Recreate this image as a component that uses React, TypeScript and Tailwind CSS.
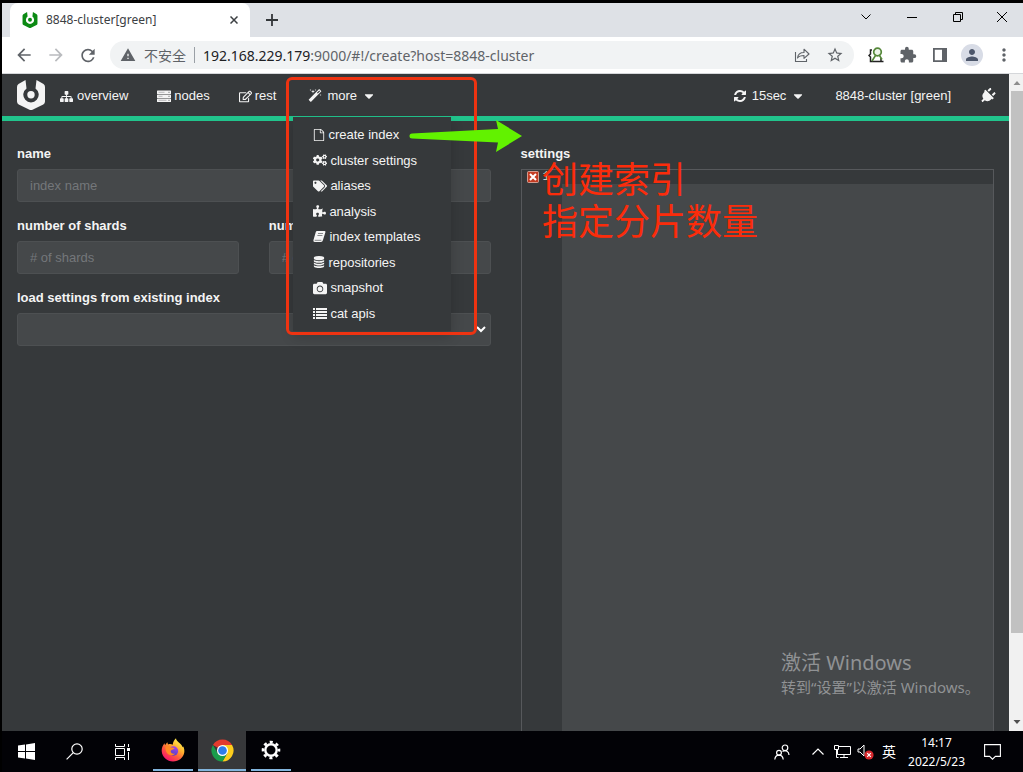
import React from 'react';
import { FaCamera, FaCaretDown, FaCogs, FaPlug, FaPuzzlePiece, FaRegEdit, FaTags } from 'react-icons/fa';
import { MdArrowBack, MdArrowForward, MdRefresh, MdWarning, MdStarBorder, MdExtension, MdPerson, MdMoreVert } from 'react-icons/md';

type GlyphProps = { d: string; className?: string };

function Glyph({ d, className = 'h-[13px] w-[13px]' }: GlyphProps) {
  return (
    <svg viewBox="0 0 1792 1792" className={className} fill="currentColor" aria-hidden="true">
      <path d={d} />
    </svg>
  );
}

const SITEMAP =
  'M1792 1248v320q0 40-28 68t-68 28h-320q-40 0-68-28t-28-68v-320q0-40 28-68t68-28h96v-192h-512v192h96q40 0 68 28t28 68v320q0 40-28 68t-68 28h-320q-40 0-68-28t-28-68v-320q0-40 28-68t68-28h96v-192h-512v192h96q40 0 68 28t28 68v320q0 40-28 68t-68 28h-320q-40 0-68-28t-28-68v-320q0-40 28-68t68-28h96v-192q0-52 38-90t90-38h512v-192h-96q-40 0-68-28t-28-68v-320q0-40 28-68t68-28h320q40 0 68 28t28 68v320q0 40-28 68t-68 28h-96v192h512q52 0 90 38t38 90v192h96q40 0 68 28t28 68z';
const MAGIC =
  'M1254 581l293-293-107-107-293 293zm447-293q0 27-18 45l-1286 1286q-18 18-45 18t-45-18l-198-198q-18-18-18-45t18-45l1286-1286q18-18 45-18t45 18l198 198q18 18 18 45zm-1351-190l98 30-98 30-30 98-30-98-98-30 98-30 30-98zm350 162l196 60-196 60-60 196-60-196-196-60 196-60 60-196zm930 478l98 30-98 30-30 98-30-98-98-30 98-30 30-98zm-640-640l98 30-98 30-30 98-30-98-98-30 98-30 30-98z';
const REFRESH =
  'M1639 1056q0 5-1 7-64 268-268 434.5t-478 166.5q-146 0-282.5-55t-243.5-157l-129 129q-19 19-45 19t-45-19-19-45v-448q0-26 19-45t45-19h448q26 0 45 19t19 45-19 45l-137 137q71 66 161 102t187 36q134 0 250-65t186-179q11-17 53-117 8-23 30-23h192q13 0 22.5 9.5t9.5 22.5zm25-800v448q0 26-19 45t-45 19h-448q-26 0-45-19t-19-45 19-45l138-138q-148-137-349-137-134 0-250 65t-186 179q-11 17-53 117-8 23-30 23h-199q-13 0-22.5-9.5t-9.5-22.5v-7q65-268 270-434.5t480-166.5q146 0 284 55.5t245 156.5l130-129q19-19 45-19t45 19 19 45z';
const FILE =
  'M1596 380q28 28 48 76t20 88v1152q0 40-28 68t-68 28h-1344q-40 0-68-28t-28-68v-1600q0-40 28-68t68-28h896q40 0 88 20t76 48zm-444-244v376h376q-10-29-22-41l-313-313q-12-12-41-22zm384 1528v-1024h-416q-40 0-68-28t-28-68v-416h-768v1536h1280z';
const DATABASE =
  'M896 768q237 0 443-43t325-127v170q0 69-103 128t-280 93.5-385 34.5-385-34.5-280-93.5-103-128v-170q119 84 325 127t443 43zm0 768q237 0 443-43t325-127v170q0 69-103 128t-280 93.5-385 34.5-385-34.5-280-93.5-103-128v-170q119 84 325 127t443 43zm0-384q237 0 443-43t325-127v170q0 69-103 128t-280 93.5-385 34.5-385-34.5-280-93.5-103-128v-170q119 84 325 127t443 43zm0-1152q208 0 385 34.5t280 93.5 103 128v128q0 69-103 128t-280 93.5-385 34.5-385-34.5-280-93.5-103-128v-128q0-69 103-128t280-93.5 385-34.5z';

function Logo({ className }: { className: string }) {
  return (
    <svg viewBox="0 0 28 30" className={className} fill="currentColor" aria-hidden="true">
      <path d="M8.500 0L9.500 8.450A7.700 7.700 0 1 0 18.500 8.450L19.500 0 26.500 4Q28 5 28 7v14.500q0 2-1.700 3.100L16 29.500q-2 1-4 0L1.700 24.600Q0 23.500 0 21.500V7q0-2 1.500-3z" />
      <circle cx="14" cy="14.700" r="3.700" />
    </svg>
  );
}

function ServerIcon() {
  return (
    <svg viewBox="0 0 14 13" className="h-[13px] w-[14px]" aria-hidden="true">
      <g fill="#f4f4f4">
        <rect y=".5" width="14" height="3.500" rx=".6" />
        <rect y="4.500" width="14" height="3.500" rx=".6" />
        <rect y="8.500" width="14" height="3.500" rx=".6" />
      </g>
      <path d="M1.500 2.300h6M1.500 6.300h4M1.500 10.300h8" stroke="#a9abad" strokeWidth=".8" />
      <path d="M11.500 2.300h1M11.500 6.300h1M11.500 10.300h1" stroke="#55585a" />
    </svg>
  );
}

function BookIcon() {
  return (
    <svg viewBox="0 0 13 13" className="h-[13px] w-[13px]" aria-hidden="true">
      <path d="M4 1h7.500q1.300 0 .9 1.300l-2.500 8Q9.500 12 8 12H1.700Q0 12 .4 10.300L2.800 2Q3.100 1 4 1z" fill="#f4f4f4" />
      <path d="M5 3.500h5M4.400 5.500h5M1.700 10.300h6.600" stroke="#6c6f71" strokeWidth=".8" />
    </svg>
  );
}

function ListIcon() {
  return (
    <svg viewBox="0 0 14 13" className="h-[13px] w-[14px]" fill="currentColor" aria-hidden="true">
      <path d="M0 1h2v2H0zM3 1h11v2H3zM0 4h2v2H0zM3 4h11v2H3zM0 7h2v2H0zM3 7h11v2H3zM0 10h2v2H0zM3 10h11v2H3z" />
    </svg>
  );
}

const menuItems: { label: string; icon: React.ReactNode }[] = [
  { label: 'create index', icon: <Glyph d={FILE} className="h-[14px] w-[12px]" /> },
  { label: 'cluster settings', icon: <FaCogs className="h-[14px] w-[14px]" /> },
  { label: 'aliases', icon: <FaTags className="h-[14px] w-[14px]" /> },
  { label: 'analysis', icon: <FaPuzzlePiece className="h-[12px] w-[13px]" /> },
  { label: 'index templates', icon: <BookIcon /> },
  { label: 'repositories', icon: <Glyph d={DATABASE} className="h-[14px] w-[12px]" /> },
  { label: 'snapshot', icon: <FaCamera className="h-[14px] w-[14px]" /> },
  { label: 'cat apis', icon: <ListIcon /> },
];

function TabStrip() {
  return (
    <div className="flex h-[34px] items-end bg-[#dee1e6] pl-2 text-[#3c4043]">
      <div className="flex h-[34px] w-[240px] items-center rounded-t-lg bg-white pr-2 pl-3">
        <Logo className="h-[16px] w-[16px] text-[#0c8a14]" />
        <span className="ml-2 flex-1 text-[12px]">8848-cluster[green]</span>
        <button aria-label="Close tab" className="flex h-4 w-4 items-center justify-center">
          <svg viewBox="0 0 8 8" className="h-2 w-2" stroke="currentColor" strokeWidth="1.500"><path d="M.5.5l7 7M7.500.5l-7 7" /></svg>
        </button>
      </div>
      <button aria-label="New tab" className="ml-4 flex h-full w-3 items-center justify-center">
        <svg viewBox="0 0 12 12" className="h-3 w-3" stroke="#333639" strokeWidth="1.800"><path d="M6 0v12M0 6h12" /></svg>
      </button>
      <div className="ml-auto flex h-full items-center text-black">
        <button aria-label="Search tabs" className="mb-1.5 flex w-[46px] justify-center">
          <svg viewBox="0 0 10 6" className="h-[6px] w-[10px]" fill="none" stroke="currentColor"><path d="M.5.5L5 5 9.500.5" /></svg>
        </button>
        <button aria-label="Minimize" className="mb-1.5 flex w-[46px] justify-center">
          <svg viewBox="0 0 10 10" className="h-[10px] w-[10px]" stroke="currentColor"><path d="M0 5.500h10" /></svg>
        </button>
        <button aria-label="Restore" className="mb-1.5 flex w-[46px] justify-center">
          <svg viewBox="0 0 10 10" className="h-[10px] w-[10px]" fill="none" stroke="currentColor"><path d="M.5 2.500h7v7h-7zM2.500 2.500v-2h7v7h-2" /></svg>
        </button>
        <button aria-label="Close" className="mb-1.5 flex w-[42px] justify-center">
          <svg viewBox="0 0 10 10" className="h-[10px] w-[10px]" stroke="currentColor"><path d="M0 0l10 10M10 0L0 10" /></svg>
        </button>
      </div>
    </div>
  );
}

function Toolbar() {
  return (
    <div className="flex h-[37px] items-center border-b border-[#d5d7da] bg-white pr-[3px] pl-3 text-[#5f6368]">
      <button aria-label="Back" className="flex h-5 w-5 items-center justify-center"><MdArrowBack size={20} /></button>
      <button aria-label="Forward" className="ml-3 flex h-5 w-5 items-center justify-center text-[#b9bbbe]"><MdArrowForward size={20} /></button>
      <button aria-label="Reload" className="ml-3 flex h-5 w-5 items-center justify-center"><MdRefresh size={21} /></button>
      <div className="ml-3 flex h-7 flex-1 items-center rounded-full bg-[#f1f3f4] px-2.5">
        <MdWarning size={16} />
        <span className="ml-2 text-[14px]">不安全</span>
        <span className="mx-2 h-4 w-px bg-[#9aa0a6]" />
        <span className="flex-1 text-[14px] whitespace-nowrap">
          <span className="text-[#202124]">192.168.229.179</span>:9000/#!/create?host=8848-cluster
        </span>
        <button aria-label="Share" className="mr-4">
          <svg viewBox="0 0 16 16" className="h-4 w-4" fill="none" stroke="currentColor" strokeWidth="1.100">
            <path d="M1.500 5v9.500h11V12" />
            <path d="M3.500 11c.5-4 3-5.500 6.500-5.500V2.200L15 7l-5 4.300V8.500C7 8.500 5 9 3.500 11z" strokeLinejoin="round" />
          </svg>
        </button>
        <button aria-label="Bookmark"><MdStarBorder size={18} /></button>
      </div>
      <div className="flex items-center">
        <button aria-label="Developer helper" className="ml-1.5 flex w-8 justify-center">
          <svg viewBox="0 0 16 16" className="h-4 w-4" fill="none">
            <path d="M4 3H2.500v4L1 8.500 2.500 10v4.500H5M13 11v3.500M3 14.500h12.500" stroke="#222" strokeWidth="1.500" />
            <circle cx="9.500" cy="5" r="3.800" stroke="#56883a" strokeWidth="1.700" fill="#eef5ea" />
            <path d="M7.500 8.500L4 14M11.500 8.500L14 12.500" stroke="#56883a" strokeWidth="1.600" />
          </svg>
        </button>
        <button aria-label="Extensions" className="flex w-8 justify-center"><MdExtension size={18} /></button>
        <button aria-label="Side panel" className="flex w-8 justify-center">
          <svg viewBox="0 0 14 14" className="h-[14px] w-[14px]"><path fill="currentColor" fillRule="evenodd" d="M0 0h14v14H0zM1.800 1.800v10.400H9V1.800z" /></svg>
        </button>
        <button aria-label="Profile" className="flex w-8 justify-center">
          <span className="flex h-[22px] w-[22px] items-center justify-center rounded-full bg-[#d8dce6] text-[#4d576b]"><MdPerson size={18} /></span>
        </button>
        <button aria-label="Menu" className="flex w-8 justify-center"><MdMoreVert size={20} /></button>
      </div>
    </div>
  );
}

function NavBar() {
  return (
    <nav className="flex h-[47px] border-b-[5px] border-[#21c48c] pr-[14px] pl-[15px] text-[13px]">
      <a href="#home" aria-label="Home" className="flex items-center"><Logo className="h-[30px] w-[28px]" /></a>
      <ul className="flex flex-1 pt-0.5">
        <li className="flex"><a href="#overview" className="flex items-center gap-1 px-[15px]"><Glyph d={SITEMAP} />overview</a></li>
        <li className="flex"><a href="#nodes" className="flex items-center gap-[3px] px-[14px]"><ServerIcon />nodes</a></li>
        <li className="flex"><a href="#rest" className="flex items-center gap-[3px] px-[15px]"><FaRegEdit size={13} />rest</a></li>
        <li className="relative flex">
          <button className="flex items-center gap-[5px] px-[17px]"><Glyph d={MAGIC} className="h-[14px] w-[14px]" />more<FaCaretDown className="ml-0.5 h-[14px] w-[10px]" /></button>
          <ul className="absolute top-[41px] left-0.5 z-10 grid h-[214px] w-[158px] auto-rows-fr bg-[#36393b] py-[5px] pl-5 shadow-[0_6px_12px_rgba(0,0,0,0.18)]">
            {menuItems.map((item) => (
              <li key={item.label} className="flex">
                <a href="#menu" className="flex items-center gap-[3px] whitespace-nowrap">{item.icon}{item.label}</a>
              </li>
            ))}
          </ul>
        </li>
      </ul>
      <div className="flex pt-0.5">
        <button className="flex items-center gap-[5px]"><Glyph d={REFRESH} className="h-[14px] w-[14px]" />15sec<FaCaretDown className="ml-0.5 h-[14px] w-[10px]" /></button>
        <a href="#cluster" className="ml-8 flex items-center">8848-cluster [green]</a>
        <button aria-label="Disconnect" className="ml-[29px] flex items-center"><FaPlug className="h-[16px] w-[15px] rotate-45" /></button>
      </div>
    </nav>
  );
}

function Field({ id, label, placeholder }: { id: string; label: string; placeholder: string }) {
  return (
    <div className="flex flex-col gap-1.5">
      <label htmlFor={id} className="leading-[18px] font-bold">{label}</label>
      <input id={id} placeholder={placeholder} className="h-[33px] w-full rounded-[3px] border border-[#4d5052] bg-[#45484a] px-3 placeholder:text-[#74777a]" />
    </div>
  );
}

function CreateIndex() {
  return (
    <main className="grid min-h-0 flex-1 grid-cols-2 gap-[30px] px-[15px] pt-6 text-[13px]">
      <form className="flex flex-col gap-[15px]">
        <Field id="name" label="name" placeholder="index name" />
        <div className="grid grid-cols-2 gap-[30px]">
          <Field id="shards" label="number of shards" placeholder="# of shards" />
          <Field id="replicas" label="number of replicas" placeholder="# of replicas" />
        </div>
        <div className="flex flex-col gap-1.5">
          <label htmlFor="existing" className="leading-[18px] font-bold">load settings from existing index</label>
          <div className="relative">
            <select id="existing" className="block h-[33px] w-full appearance-none rounded-[3px] border border-[#4d5052] bg-[#45484a] px-3">
              <option />
            </select>
            <svg viewBox="0 0 10 7" className="pointer-events-none absolute top-[13px] right-[5px] h-[7px] w-[10px]" fill="none" stroke="#fff" strokeWidth="2"><path d="M1 1l4 4 4-4" /></svg>
          </div>
        </div>
      </form>
      <section className="flex min-h-0 flex-col gap-1.5">
        <label htmlFor="settings" className="leading-[18px] font-bold">settings</label>
        <div className="flex min-h-0 flex-1 border border-b-0 border-[#57595c]">
          <div className="flex h-[14px] w-10 items-center gap-1 pl-[5px] font-['Liberation_Mono'] text-[12px] text-[#c8cacc]">
            <svg viewBox="0 0 12 12" className="h-3 w-3 shrink-0"><rect x=".5" y=".5" width="11" height="11" rx="1" fill="#c23b22" stroke="#e8b5a8" strokeWidth=".8" /><path d="M3 3l6 6M9 3L3 9" stroke="#fff" strokeWidth="2" /></svg>
            1
          </div>
          <div className="flex flex-1 flex-col">
            <div className="h-[14px]" />
            <textarea id="settings" className="block w-full flex-1 resize-none bg-[#45484a]" />
          </div>
        </div>
      </section>
    </main>
  );
}

function ScrollBar() {
  return (
    <div className="flex w-[14px] shrink-0 flex-col items-center bg-[#f1f1f1]">
      <svg viewBox="0 0 14 17" className="h-[17px] w-[14px]"><path d="M4.500 11h7L8 7z" fill="#8d8d8d" /></svg>
      <div className="flex min-h-0 w-full flex-1 flex-col pl-0.5">
        <div className="h-[87%] bg-[#c1c1c1]" />
      </div>
      <svg viewBox="0 0 14 17" className="h-[17px] w-[14px]"><path d="M4.500 6h7L8 10z" fill="#505050" /></svg>
    </div>
  );
}

function FirefoxIcon() {
  return (
    <svg viewBox="0 0 24 24" className="h-6 w-6" aria-hidden="true">
      <defs>
        <linearGradient id="ffBody" x1=".85" y1=".1" x2=".25" y2=".95">
          <stop offset="0" stopColor="#fff44f" /><stop offset=".35" stopColor="#ffb02e" /><stop offset=".65" stopColor="#ff5a3c" /><stop offset="1" stopColor="#f5156c" />
        </linearGradient>
        <linearGradient id="ffCore" x1=".7" y1="0" x2=".3" y2="1">
          <stop offset="0" stopColor="#a648e8" /><stop offset="1" stopColor="#4f3cc9" />
        </linearGradient>
      </defs>
      <path d="M3.500 5.200L4 7.300l2.300-3 .7 2.200c2-.7 3.500-.3 4.700.2.300-2.500 1.600-4.800 3.300-6.400 0 2.500 2.200 3.300 4 5.200C20.500 7 21.400 8.300 21.700 9.200l.6-.7c1 2.300 1.200 4 1 5.800C22.500 19.800 17.700 23.500 12 23.500S1 19 .7 13C.6 10 1.700 7.300 3.500 5.200z" fill="url(#ffBody)" />
      <circle cx="12.500" cy="13" r="4.700" fill="url(#ffCore)" />
      <path d="M4.500 8.500c2-1 4.500-.5 5.500 1 1.500 0 3 .2 3.700 1-1.700 1-3.700 1.200-4 2.500-.2 2 2 3.300 4.500 2.500-1.500 2.300-6 2.500-8.200-.5-1.300-2-1.800-4.500-1.500-6.500z" fill="#ff8a23" />
    </svg>
  );
}

function ChromeIcon() {
  return (
    <svg viewBox="0 0 48 48" className="h-[23px] w-[23px]" aria-hidden="true">
      <path d="M24 24L4.080 12.500A23 23 0 0 1 43.920 12.500H24z" fill="#e33b2e" />
      <path d="M24 12.500h19.920A23 23 0 0 1 24 47l9.960-17.250z" fill="#fccd1d" />
      <path d="M4.080 12.500l9.960 17.250L33.960 29.750 24 47A23 23 0 0 1 4.080 12.500z" fill="#1a9c4b" />
      <circle cx="24" cy="24" r="11.500" fill="#fff" />
      <circle cx="24" cy="24" r="9" fill="#2f7de9" />
    </svg>
  );
}

function SettingsIcon() {
  return (
    <svg viewBox="0 0 20 20" className="h-5 w-5" fill="none" stroke="#fff" aria-hidden="true">
      <circle cx="10" cy="10" r="5.700" strokeWidth="2.400" />
      <circle cx="10" cy="10" r="8" strokeWidth="2.600" strokeDasharray="3.100 3.183" strokeDashoffset="1.550" />
    </svg>
  );
}

function TaskBar() {
  return (
    <footer className="flex h-[41px] shrink-0 items-center bg-[#020206] text-white">
      <button aria-label="Start" className="flex h-full w-12 items-center justify-center">
        <svg viewBox="0 0 17 17" className="h-[17px] w-[17px]" fill="#fff"><path d="M0 2.500l7-1V8H0zM8 1.400L17 0v8H8zM0 9h7v6.500l-7-1zM8 9h9v8l-9-1.400z" /></svg>
      </button>
      <button aria-label="Search" className="flex h-full w-12 items-center justify-center">
        <svg viewBox="0 0 17 17" className="h-[17px] w-[17px]" fill="none" stroke="#fff" strokeWidth="1.200"><circle cx="11" cy="6" r="5.200" /><path d="M7.300 9.700L.6 16.400" /></svg>
      </button>
      <button aria-label="Task view" className="flex h-full w-12 items-center justify-center">
        <svg viewBox="0 0 17 16" className="h-4 w-[17px]" fill="none" stroke="#fff"><path d="M1.500 0v2.500h9V0M1.500 4.500h9v7h-9zM1.500 16v-2.500h9V16M14.500 0v3M14.500 8v8" /><path d="M13 4h3v3h-3z" fill="#fff" stroke="none" /></svg>
      </button>
      <button aria-label="Firefox" className="ml-[3px] flex h-full w-12 flex-col items-center pb-px">
        <span className="flex flex-1 items-center"><FirefoxIcon /></span><span className="h-0.5 w-10 bg-[#82b5dd]" />
      </button>
      <button aria-label="Chrome" className="ml-px flex h-full w-12 flex-col items-center bg-[#37383a] pb-px">
        <span className="flex flex-1 items-center"><ChromeIcon /></span><span className="h-0.5 w-12 bg-[#82b5dd]" />
      </button>
      <button aria-label="Settings" className="ml-px flex h-full w-12 flex-col items-center pb-px">
        <span className="flex flex-1 items-center"><SettingsIcon /></span><span className="h-0.5 w-10 bg-[#82b5dd]" />
      </button>
      <div className="ml-auto flex items-center pr-[22px]">
        <button aria-label="People">
          <svg viewBox="0 0 16 16" className="h-4 w-4" fill="none" stroke="#fff" strokeWidth="1.200"><circle cx="11" cy="3.800" r="2.800" /><path d="M8.500 7.500Q11 6 13 7.300 15 8.500 15 11" /><circle cx="5" cy="8.700" r="2.400" /><path d="M.8 15.500Q1.200 11.300 5 11.200q3.800.1 4.200 4.300" /></svg>
        </button>
        <button aria-label="Show hidden icons" className="ml-[22px]">
          <svg viewBox="0 0 12 7" className="h-[7px] w-3" fill="none" stroke="#fff" strokeWidth="1.200"><path d="M.5 6.500L6 1l5.500 5.500" /></svg>
        </button>
        <button aria-label="Network" className="ml-[10px]">
          <svg viewBox="0 0 17 15" className="h-[15px] w-[17px]" fill="none" stroke="#fff"><path d="M5 2.500h11.500v8H3.500V6M10 10.500v3M6 13.500h8M.5 1.500h4v4h-4zM2.500 5.500v8h2" /></svg>
        </button>
        <button aria-label="Volume muted" className="ml-1.5">
          <svg viewBox="0 0 17 17" className="h-[17px] w-[17px]" fill="none"><path d="M1 6h2l4-4v11l-4-4H1z" stroke="#fff" /><circle cx="12" cy="12" r="4.600" fill="#d5282d" /><path d="M10.200 10.200l3.600 3.600M13.800 10.200l-3.600 3.600" stroke="#fff" strokeWidth="1.200" /></svg>
        </button>
        <span className="ml-2 text-[14px]">英</span>
        <div className="ml-3 text-center text-[12px] leading-[19px]"><div>14:17</div><div>2022/5/23</div></div>
        <button aria-label="Notifications" className="ml-[19px]">
          <svg viewBox="0 0 17 16" className="h-4 w-[17px]" fill="none" stroke="#fff" strokeWidth="1.100"><path d="M.6.600h15.800v11.800h-5L8.500 15.200l-2.900-2.800h-5z" /></svg>
        </button>
      </div>
    </footer>
  );
}

export default function App() {
  return (
    <div className="relative flex h-screen flex-col overflow-hidden bg-black pt-[3px] pl-0.5 font-['Noto_Sans','Noto_Sans_CJK_SC',sans-serif]">
      <TabStrip />
      <Toolbar />
      <div className="flex min-h-0 flex-1">
        <div className="flex min-w-0 flex-1 flex-col bg-[#36393b] font-['Liberation_Sans',Arial,sans-serif] text-[#f4f4f4]">
          <NavBar />
          <CreateIndex />
        </div>
        <ScrollBar />
      </div>
      <TaskBar />

      <div className="pointer-events-none absolute top-[77px] left-[286px] z-20 h-[258px] w-[191px] rounded-md border-3 border-[#ee3311]" />
      <svg viewBox="0 0 114 34" className="pointer-events-none absolute top-[119px] left-[409px] z-20 h-[34px] w-[114px]" aria-hidden="true">
        <path d="M3 14.500L89 10 87 1l26 16-26 16 2-9.500L3 19.500a2.500 2.500 0 0 1 0-5z" fill="#62f200" />
      </svg>
      <p className="pointer-events-none absolute top-[156px] left-[542px] z-20 font-['Noto_Sans_CJK_SC',sans-serif] text-[36px] leading-[42px] font-normal text-[#fb2c0b]">
        创建索引<br />指定分片数量
      </p>
      <div className="pointer-events-none absolute right-[42px] bottom-[75px] z-20 w-[200px] whitespace-nowrap text-[#909294]">
        <p className="text-[20px] leading-[28px]">激活 Windows</p>
        <p className="text-[15px] leading-[20px]">转到“设置”以激活 Windows。</p>
      </div>
    </div>
  );
}
